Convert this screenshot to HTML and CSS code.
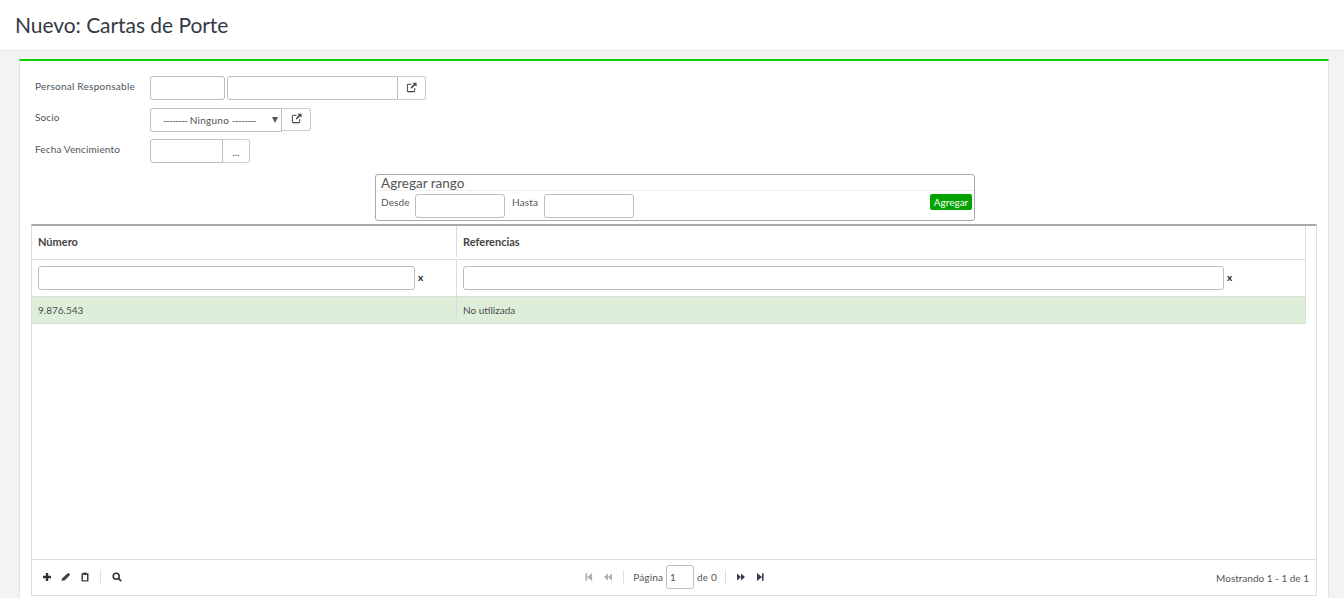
FILE: index.html
```html
<!DOCTYPE html>
<html lang="es">
<head>
<meta charset="utf-8">
<title>Nuevo: Cartas de Porte</title>
<link rel="stylesheet" href="styles.css">
</head>
<body>
<header class="page-head"><h1>Nuevo: Cartas de Porte</h1></header>
<main class="panel">
  <form class="form">
    <div class="row row-1">
      <label class="lbl lbl-1">Personal Responsable</label>
      <input class="inp w75" type="text">
      <div class="group">
        <input class="inp w171 join-r" type="text">
        <button class="addon w28" type="button"><svg class="ext" viewBox="0 0 12 12"><path d="M9.5 6.5v3a1 1 0 0 1-1 1h-6a1 1 0 0 1-1-1v-6a1 1 0 0 1 1-1h3.5" fill="none" stroke="currentColor" stroke-width="1.1"/><path d="M7 .7h4.5v4.5L9.9 3.6 6.3 7.2 5 5.9l3.6-3.6z" fill="currentColor"/></svg></button>
      </div>
    </div>
    <div class="row row-2">
      <label class="lbl lbl-2">Socio</label>
      <div class="group">
        <div class="select"><span class="dash">--------</span> Ninguno <span class="dash">--------</span><span class="caret"></span></div>
        <button class="addon w29" type="button"><svg class="ext" viewBox="0 0 12 12"><path d="M9.5 6.5v3a1 1 0 0 1-1 1h-6a1 1 0 0 1-1-1v-6a1 1 0 0 1 1-1h3.5" fill="none" stroke="currentColor" stroke-width="1.1"/><path d="M7 .7h4.5v4.5L9.9 3.6 6.3 7.2 5 5.9l3.6-3.6z" fill="currentColor"/></svg></button>
      </div>
    </div>
    <div class="row row-3">
      <label class="lbl lbl-3">Fecha Vencimiento</label>
      <div class="group">
        <input class="inp w73 join-r" type="text">
        <button class="addon w27 dots" type="button">...</button>
      </div>
    </div>
    <section class="range">
      <div class="range-title">Agregar rango</div>
      <div class="range-body">
        <label class="rlbl">Desde</label>
        <input class="inp w90" type="text">
        <label class="rlbl hasta">Hasta</label>
        <input class="inp w90" type="text">
        <button class="add" type="button">Agregar</button>
      </div>
    </section>
  </form>

  <section class="grid">
    <div class="grid-body">
      <div class="tr head">
        <div class="td c1">Número</div>
        <div class="td c2">Referencias</div>
      </div>
      <div class="tr filter">
        <div class="td c1"><input class="inp f1" type="text"><span class="x">x</span></div>
        <div class="td c2"><input class="inp f2" type="text"><span class="x">x</span></div>
      </div>
      <div class="tr data">
        <div class="td c1">9.876.543</div>
        <div class="td c2">No utilizada</div>
      </div>
    </div>
    <footer class="pager">
      <div class="tools">
        <svg class="ic" viewBox="0 0 10 10"><path d="M3.8 1h2.4v2.8H9v2.4H6.2V9H3.8V6.2H1V3.8h2.8z" fill="#2c3038"/></svg>
        <svg class="ic" viewBox="0 0 10 10"><path d="M7.2 .8l2 2-5.6 5.6-2 .2-1 .9.4-3.1z" fill="#4a4038"/></svg>
        <svg class="ic" viewBox="0 0 10 10"><path d="M3.5 1.2V.4h3v.8h2v8.4h-7V1.2zM3 3v5.2h4V3z" fill="#3a4048"/></svg>
        <span class="sep"></span>
        <svg class="ic" viewBox="0 0 10 10"><circle cx="4.2" cy="4.2" r="3" fill="none" stroke="#3a3632" stroke-width="1.6"/><path d="M6.4 6.4l2.8 2.8" stroke="#3a3632" stroke-width="1.9"/></svg>
      </div>
      <div class="nav">
        <svg class="ic off" viewBox="0 0 10 10"><path d="M1.5 1.2h1.6v7.6H1.5zM3.1 5l5-4v8z" fill="#aab0b8"/></svg>
        <svg class="ic off prev" viewBox="0 0 10 10"><path d="M5 5l4-3.6v7.2zM1 5l4-3.6v7.2z" fill="#b0aea8"/></svg>
        <span class="sep"></span>
        <span class="pg">Página</span>
        <input class="inp page" type="text" value="1">
        <span class="pg">de 0</span>
        <span class="sep sep-r"></span>
        <svg class="ic next" viewBox="0 0 10 10"><path d="M5 5L1 1.4v7.2zM9 5L5 1.4v7.2z" fill="#34404e"/></svg>
        <svg class="ic" viewBox="0 0 10 10"><path d="M7 5L2 1v8zM7 1.2h1.6v7.6H7z" fill="#34404e"/></svg>
      </div>
      <div class="count">Mostrando 1 - 1 de 1</div>
    </footer>
  </section>
</main>
</body>
</html>
```

FILE: styles.css
```css
* { box-sizing: border-box; }
html, body { margin: 0; height: 598px; overflow: hidden; }
body {
  background: #f3f3f3;
  font-family: Lato, "Liberation Sans", sans-serif;
  font-size: 10px;
  color: #555;
  display: flex;
  flex-direction: column;
}
.page-head {
  height: 51px;
  background: #fff;
  border-bottom: 1px solid #e7e7e7;
  padding: 12px 0 0 15px;
  flex: none;
}
h1 {
  margin: 0;
  font-size: 21px;
  font-weight: 400;
  line-height: 26px;
  letter-spacing: -.05px;
  color: #343a44;
}
.panel {
  margin: 8px 15px 0 19px;
  flex: 1;
  min-height: 0;
  background: #fff;
  border-top: 2px solid #0bcf0b;
  border-left: 1px solid #e2e2e2;
  border-right: 1px solid #e2e2e2;
  padding: 0 11px 2px 11px;
  display: flex;
  flex-direction: column;
}
.form { flex: none; }
.row { display: flex; align-items: flex-start; padding-left: 4px; }
.row-1 { padding-top: 15px; gap: 2px; }
.row-2 { padding-top: 8px; }
.row-3 { padding-top: 7px; }
.lbl { width: 115px; flex: none; color: #555; font-size: 10px; line-height: 12px; letter-spacing: .13px; }
.lbl-1 { padding-top: 4px; width: 113px; color: #4a5560; letter-spacing: .25px; }
.lbl-2 { padding-top: 3px; }
.lbl-3 { padding-top: 4px; }
.group { display: flex; }
.inp {
  display: block;
  height: 24px;
  border: 1px solid #bdbdbd;
  border-radius: 3px;
  background: #fff;
  padding: 0 3px;
  font: inherit;
  color: #555;
  outline: none;
}
.w75 { width: 75px; }
.w171 { width: 171px; }
.w73 { width: 73px; }
.w90 { width: 90px; }
.join-r { border-radius: 3px 0 0 3px; }
.addon {
  height: 24px;
  padding: 0;
  border: 1px solid #ccc;
  border-left: 0;
  border-radius: 0 3px 3px 0;
  background: #fff;
  color: #444;
  font: inherit;
  display: flex;
  align-items: center;
  justify-content: center;
}
.w28 { width: 28px; }
.w29 { width: 29px; height: 23px; }
.w27 { width: 27px; }
.dots { padding-top: 2px; font-size: 10px; }
.ext { width: 11px; height: 11px; display: block; margin-top: -2px; }
.select {
  width: 132px;
  height: 24px;
  border: 1px solid #bdbdbd;
  border-radius: 3px 0 0 3px;
  padding: 5px 0 0 12px;
  line-height: 13px;
  color: #555;
  position: relative;
  letter-spacing: .25px;
}
.dash { letter-spacing: -.72px; }
.caret {
  position: absolute;
  right: 3px;
  top: 8px;
  border-style: solid;
  border-width: 6px 3px 0;
  border-color: #555 transparent transparent;
}
.range {
  width: 600px;
  height: 47px;
  margin: 11px 0 0 344px;
  border: 1px solid #a8a8a8;
  border-radius: 3px;
}
.range-title {
  height: 16px;
  padding-left: 5px;
  font-size: 13.5px;
  line-height: 17px;
  color: #555;
  border-bottom: 1px solid #eee;
}
.range-body { display: flex; align-items: flex-start; padding: 3px 2px 0 5px; }
.rlbl { line-height: 12px; padding-top: 2px; width: 34px; flex: none; letter-spacing: .15px; }
.hasta { margin-left: 7px; width: 32px; }
.add {
  margin-left: auto;
  height: 16px;
  width: 42px;
  padding: 0;
  border: 0;
  border-radius: 2px;
  background: #00a300;
  color: #fff;
  font: inherit;
  line-height: 16px;
}
.grid {
  margin-top: 3px;
  flex: 1;
  min-height: 0;
  border-top: 2px solid #aaa;
  border-left: 1px solid #ddd;
  border-right: 1px solid #ddd;
  border-bottom: 1px solid #ddd;
  display: flex;
  flex-direction: column;
}
.grid-body { flex: 1; min-height: 0; }
.tr { display: flex; width: 1274px; border-right: 1px solid #ddd; }
.td { padding-left: 6px; display: flex; align-items: center; }
.c1 { width: 425px; border-right: 1px solid #ddd; flex: none; }
.c2 { flex: 1; }
.head { height: 34px; border-bottom: 1px solid #ddd; font-weight: 700; color: #444; font-size: 11px; padding-bottom: 2px; }
.filter { height: 37px; border-bottom: 1px solid #ddd; }
.data { height: 27px; background: #deefd9; border-bottom: 1px solid #d5dcd3; color: #4c4c4c; }
.f1 { width: 377px; }
.f2 { width: 761px; }
.x { margin-left: 3px; font-size: 10px; font-weight: 700; color: #222; position: relative; top: -1px; }
.pager {
  flex: none;
  height: 36px;
  border-top: 1px solid #ddd;
  display: flex;
  align-items: center;
  padding: 0 7px 2px 10px;
  justify-content: space-between;
}
.tools, .nav { display: flex; align-items: center; }
.tools .ic { margin-right: 9px; }
.tools .sep { margin: 0 11px 0 1px; }
.ic { width: 10px; height: 10px; display: block; flex: none; }
.sep { width: 1px; height: 14px; background: #e0e0e0; flex: none; }
.nav { margin-left: 2px; }
.nav .ic { margin: 0 5px; }
.nav .prev { margin-left: 4px; }
.nav .next { margin-right: 4px; }
.nav .sep { margin: 0 9px 0 5px; }
.nav .sep-r { margin: 0 5px 0 8px; }
.pg { color: #555; letter-spacing: .15px; }
.page { width: 28px; margin: 0 3px 0 3px; }
.count { color: #555; padding-top: 2px; }
```
